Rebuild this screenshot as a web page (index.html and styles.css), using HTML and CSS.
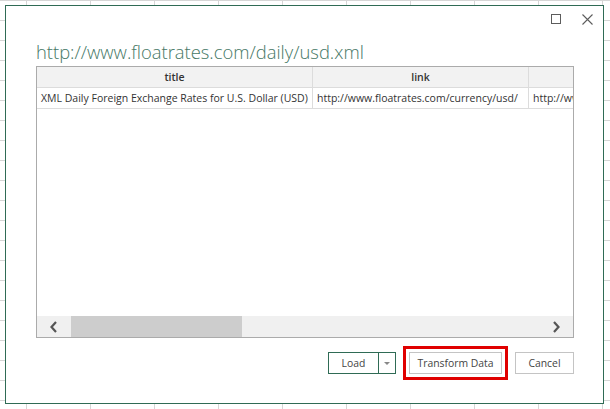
FILE: index.html
```html
<!DOCTYPE html>
<html>
<head>
<meta charset="utf-8">
<link rel="stylesheet" href="styles.css">
</head>
<body>
<div class="dialog">
  <div class="titlebar">
    <span class="tb-max"></span>
    <svg class="tb-close" width="11" height="11" viewBox="0 0 11 11"><path d="M0.5 0.5 L10.5 10.5 M10.5 0.5 L0.5 10.5" stroke="#5c5c5c" stroke-width="1.1" fill="none"/></svg>
  </div>
  <h1 class="heading">http://www.floatrates.com/daily/usd.xml</h1>
  <div class="preview">
    <div class="grid">
      <div class="row head">
        <div class="cell">title</div>
        <div class="cell">link</div>
        <div class="cell"></div>
      </div>
      <div class="row">
        <div class="cell">XML Daily Foreign Exchange Rates for U.S. Dollar (USD)</div>
        <div class="cell">http://www.floatrates.com/currency/usd/</div>
        <div class="cell">http://www.floatrates.com/</div>
      </div>
    </div>
    <div class="hscroll">
      <span class="arrow">
        <svg width="10" height="12" viewBox="0 0 10 12"><path d="M7 1 L2.5 6 L7 11" stroke="#555" stroke-width="2.2" fill="none"/></svg>
      </span>
      <div class="track"><div class="thumb"></div></div>
      <span class="arrow">
        <svg width="10" height="12" viewBox="0 0 10 12"><path d="M3 1 L7.5 6 L3 11" stroke="#555" stroke-width="2.2" fill="none"/></svg>
      </span>
    </div>
  </div>
  <div class="footer">
    <div class="split">
      <span class="split-main">Load</span>
      <span class="split-drop"><span class="caret"></span></span>
    </div>
    <button class="btn btn-marked">Transform Data</button>
    <button class="btn btn-cancel">Cancel</button>
  </div>
</div>
</body>
</html>
```

FILE: styles.css
```css
* { box-sizing: border-box; }
html, body { margin: 0; }
body {
  width: 610px;
  height: 409px;
  overflow: hidden;
  padding: 5px;
  background-color: #fff;
  background-image:
    linear-gradient(to right, #d6d6d6 1px, transparent 1px),
    linear-gradient(to bottom, #d6d6d6 1px, transparent 1px);
  background-size: 64px 100%, 100% 20px;
  background-position: 26px 0, 0 0;
  font-family: "Open Sans", "Liberation Sans", sans-serif;
  color: #333;
}
.dialog {
  width: 599px;
  height: 399px;
  border: 1px solid #2f6b55;
  background: #fff;
  display: flex;
  flex-direction: column;
  padding: 0 29px 0 30px;
}
.titlebar {
  height: 28px;
  margin-right: -19px;
  padding-top: 8px;
  display: flex;
  justify-content: flex-end;
  align-items: flex-start;
  gap: 21px;
}
.tb-max {
  width: 10px;
  height: 10px;
  border: 1px solid #5c5c5c;
}
.tb-close { display: block; }
.heading {
  margin: 6px 0 2px;
  font-size: 18.4px;
  font-weight: 300;
  line-height: 24px;
  color: #467866;
  white-space: nowrap;
}
.preview {
  height: 272px;
  border: 1px solid #ababab;
  display: flex;
  flex-direction: column;
}
.grid {
  flex: 1;
  overflow: hidden;
}
.row {
  display: grid;
  grid-template-columns: 276px 216px 1fr;
  height: 21px;
  border-bottom: 1px solid #dcdcdc;
}
.row.head { background: #f2f2f2; }
.cell {
  font-size: 10.5px;
  line-height: 20px;
  padding: 0 4px;
  white-space: nowrap;
  overflow: hidden;
  border-right: 1px solid #dcdcdc;
  color: #333;
}
.cell:last-child { border-right: none; }
.head .cell {
  text-align: center;
  font-weight: 600;
}
.hscroll {
  height: 21px;
  background: #f0f0f0;
  display: flex;
  align-items: stretch;
}
.arrow {
  width: 34px;
  display: flex;
  align-items: center;
  justify-content: center;
}
.arrow svg { display: block; }
.track { flex: 1; }
.thumb {
  width: 171px;
  height: 100%;
  background: #cdcdcd;
}
.footer {
  margin-top: 14px;
  display: flex;
  justify-content: flex-end;
  gap: 13px;
}
.split {
  display: flex;
  height: 22px;
  border: 1px solid #2f6b55;
}
.split-main {
  width: 49px;
  font-size: 10.4px;
  line-height: 20px;
  text-align: center;
  color: #444;
}
.split-drop {
  width: 17px;
  border-left: 1px solid #2f6b55;
  display: flex;
  align-items: center;
  justify-content: center;
}
.caret {
  width: 0;
  height: 0;
  border-left: 3px solid transparent;
  border-right: 3px solid transparent;
  border-top: 3px solid #888;
}
.btn {
  height: 22px;
  border: 1px solid #c4c4c4;
  background: #fff;
  font-family: inherit;
  font-size: 10.4px;
  color: #444;
  padding: 0;
  line-height: 20px;
}
.btn-marked {
  width: 93px;
  outline: 3px solid #e00000;
  outline-offset: 3px;
}
.btn-cancel { width: 59px; }
```
